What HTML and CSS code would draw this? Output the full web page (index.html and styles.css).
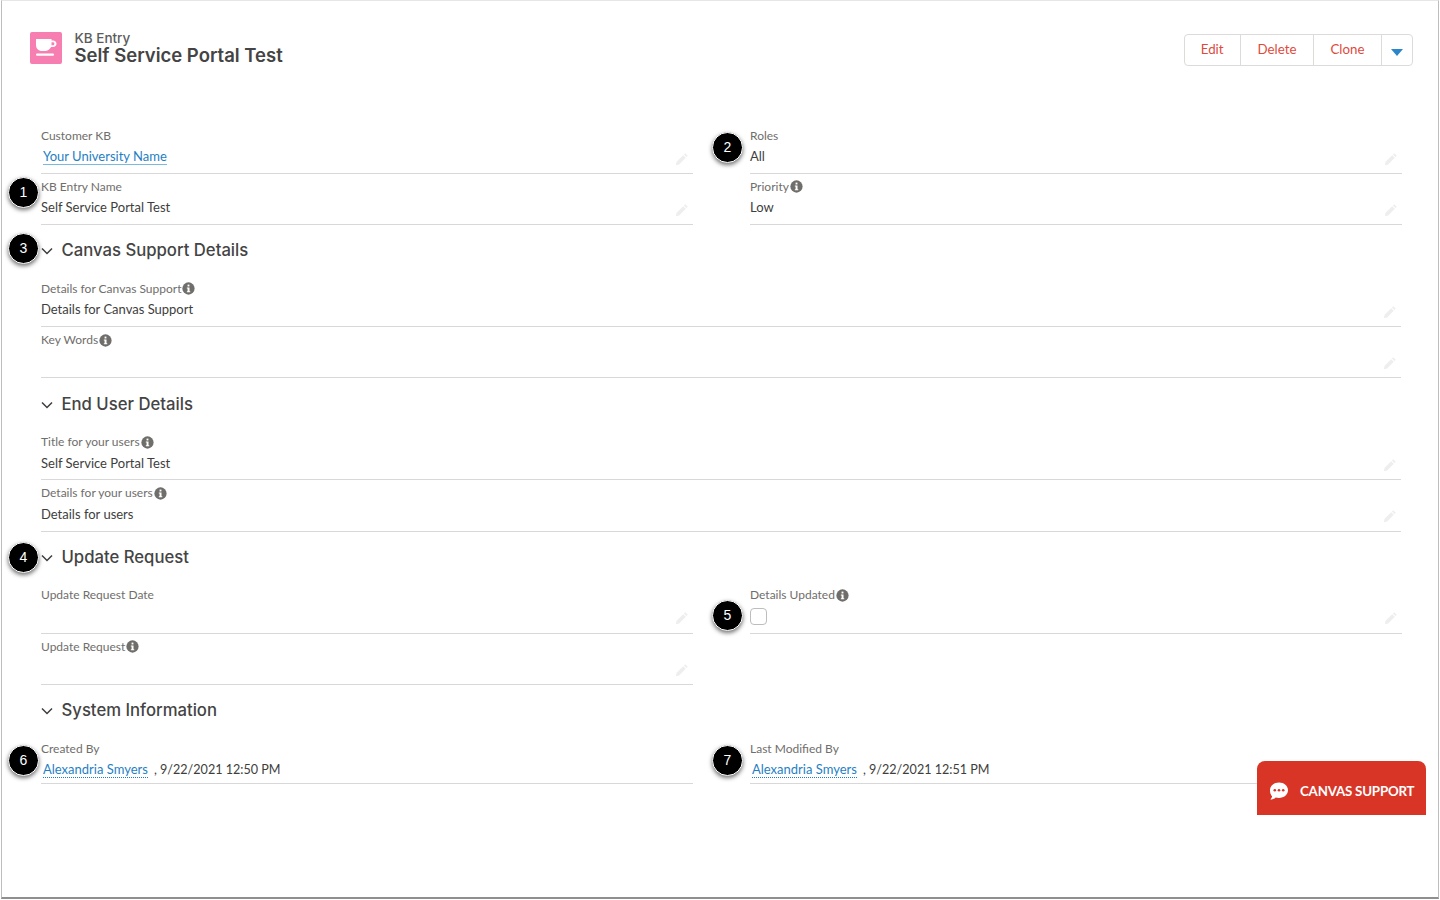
FILE: index.html
```html
<!DOCTYPE html>
<html lang="en">
<head>
    <meta charset="UTF-8">
    <title>KB Entry - Self Service Portal Test</title>
    <link rel="stylesheet" href="styles.css">
</head>
<body>
    <svg class="defs" width="0" height="0">
        <symbol id="pencil" viewBox="0 0 14 14">
            <path d="M10.2 1.2l2.6 2.6-1.3 1.3-2.6-2.6zM8.2 3.2l2.6 2.6-6.6 6.6-3.4.8.8-3.4z"/>
        </symbol>
        <symbol id="info" viewBox="0 0 14 14">
            <circle cx="7" cy="7" r="6.6" fill="#706e6b"/>
            <rect x="6" y="2.8" width="2" height="2" fill="#fff"/>
            <path d="M5.2 5.9h2.9v4h.8v1.2H5.2V9.9H6V7.1h-.8z" fill="#fff"/>
        </symbol>
        <symbol id="chevron" viewBox="0 0 14 14">
            <path d="M2 4.5l5 5 5-5" fill="none" stroke="#3e3e3c" stroke-width="1.5"/>
        </symbol>
    </svg>

    <div class="window">
        <header class="page-header">
            <div class="title-group">
                <div class="entity-icon">
                    <svg width="24" height="20" viewBox="0 0 24 20">
                        <path d="M2 1h15.5v1.6h1.6c2 0 3.4 1.4 3.4 3.2s-1.400 3.200-3.400 3.200h-2C15.500 11.500 13.500 13 11 13H8C4.500 13 2 10.500 2 7zM17.500 4.300V7.300h1.400c.9 0 1.500-.6 1.500-1.500s-.6-1.500-1.500-1.500z" fill="#fff" fill-rule="evenodd"/>
                        <rect x="2" y="15.600" width="18" height="2.200" rx="1.100" fill="#fff"/>
                    </svg>
                </div>
                <div>
                    <div class="entity-type">KB Entry</div>
                    <h1 class="entity-name">Self Service Portal Test</h1>
                </div>
            </div>
            <div class="actions">
                <button class="action">Edit</button>
                <button class="action">Delete</button>
                <button class="action">Clone</button>
                <button class="action more"><span class="caret"></span></button>
            </div>
        </header>

        <div class="record">
            <div class="two-col">
                <div class="field">
                    <div class="label">Customer KB</div>
                    <div class="value"><a class="link solid" href="#">Your University Name</a></div>
                    <svg class="edit"><use href="#pencil"/></svg>
                </div>
                <div class="field">
                    <div class="label">Roles</div>
                    <div class="value">All</div>
                    <svg class="edit"><use href="#pencil"/></svg>
                </div>
                <div class="field">
                    <div class="label">KB Entry Name</div>
                    <div class="value">Self Service Portal Test</div>
                    <svg class="edit"><use href="#pencil"/></svg>
                </div>
                <div class="field">
                    <div class="label">Priority<svg class="info"><use href="#info"/></svg></div>
                    <div class="value">Low</div>
                    <svg class="edit"><use href="#pencil"/></svg>
                </div>
            </div>

            <h2 class="section-title"><svg class="chevron"><use href="#chevron"/></svg>Canvas Support Details</h2>
            <div class="field">
                <div class="label">Details for Canvas Support<svg class="info"><use href="#info"/></svg></div>
                <div class="value">Details for Canvas Support</div>
                <svg class="edit"><use href="#pencil"/></svg>
            </div>
            <div class="field">
                <div class="label">Key Words<svg class="info"><use href="#info"/></svg></div>
                <div class="value"></div>
                <svg class="edit"><use href="#pencil"/></svg>
            </div>

            <h2 class="section-title"><svg class="chevron"><use href="#chevron"/></svg>End User Details</h2>
            <div class="field">
                <div class="label">Title for your users<svg class="info"><use href="#info"/></svg></div>
                <div class="value">Self Service Portal Test</div>
                <svg class="edit"><use href="#pencil"/></svg>
            </div>
            <div class="field">
                <div class="label">Details for your users<svg class="info"><use href="#info"/></svg></div>
                <div class="value">Details for users</div>
                <svg class="edit"><use href="#pencil"/></svg>
            </div>

            <h2 class="section-title"><svg class="chevron"><use href="#chevron"/></svg>Update Request</h2>
            <div class="two-col">
                <div class="field">
                    <div class="label">Update Request Date</div>
                    <div class="value"></div>
                    <svg class="edit"><use href="#pencil"/></svg>
                </div>
                <div class="field">
                    <div class="label">Details Updated<svg class="info"><use href="#info"/></svg></div>
                    <div class="value"><span class="checkbox"></span></div>
                    <svg class="edit"><use href="#pencil"/></svg>
                </div>
                <div class="field">
                    <div class="label">Update Request<svg class="info"><use href="#info"/></svg></div>
                    <div class="value"></div>
                    <svg class="edit"><use href="#pencil"/></svg>
                </div>
            </div>

            <h2 class="section-title"><svg class="chevron"><use href="#chevron"/></svg>System Information</h2>
            <div class="two-col">
                <div class="field short">
                    <div class="label">Created By</div>
                    <div class="value"><a class="link" href="#">Alexandria Smyers</a><span class="stamp">, 9/22/2021 12:50 PM</span></div>
                </div>
                <div class="field short">
                    <div class="label">Last Modified By</div>
                    <div class="value"><a class="link" href="#">Alexandria Smyers</a><span class="stamp">, 9/22/2021 12:51 PM</span></div>
                </div>
            </div>
        </div>

        <!-- numbered callouts sit on top of the record -->
        <span class="callout c1">1</span>
        <span class="callout c2">2</span>
        <span class="callout c3">3</span>
        <span class="callout c4">4</span>
        <span class="callout c5">5</span>
        <span class="callout c6">6</span>
        <span class="callout c7">7</span>

        <button class="support">
            <svg width="20" height="20" viewBox="0 0 20 20">
                <path d="M10 1.500c5 0 9 3.300 9 7.700s-4 7.700-9 7.700c-1.200 0-2.300-.2-3.300-.5C5.300 17.900 3.300 18.500 1.200 18.500c1-.9 1.700-2 1.900-3.300C1.800 13.900 1 12.300 1 9.200 1 4.800 5 1.500 10 1.500z" fill="#fff"/>
                <circle cx="5.800" cy="9.300" r="1.300" fill="#d83526"/>
                <circle cx="10" cy="9.300" r="1.300" fill="#d83526"/>
                <circle cx="14.200" cy="9.300" r="1.300" fill="#d83526"/>
            </svg>
            CANVAS SUPPORT
        </button>
    </div>
</body>
</html>
```

FILE: styles.css
```css
* {
    box-sizing: border-box;
}

body {
    margin: 0;
    font-family: 'Lato', sans-serif;
    color: #3e3e3c;
    background: #fff;
}

.defs {
    display: block;
    height: 0;
}

.window {
    position: relative;
    width: 1438px;
    height: 899px;
    margin-left: 1px;
    border: 1px solid #d9d9d9;
    border-top-color: #e6e6e6;
    border-bottom: 2px solid #8f8f8f;
    border-left-color: #bdbdbd;
    border-right-color: #bdbdbd;
    overflow: hidden;
}

.page-header {
    display: flex;
    justify-content: space-between;
    align-items: flex-start;
    height: 121.500px;
    padding: 30px 25px 0 28px;
}

.title-group {
    display: flex;
    gap: 12.500px;
}

.entity-icon {
    width: 32px;
    height: 32px;
    margin-top: 1px;
    background: #f77eb0;
    border-radius: 2px;
    display: flex;
    align-items: center;
    justify-content: center;
}

.entity-type {
    font-family: 'Inter', sans-serif;
    font-size: 13.500px;
    line-height: 15px;
    color: #5c5c5c;
    font-weight: 500;
}

.entity-name {
    font-family: 'Inter', sans-serif;
    font-size: 18.500px;
    font-weight: 600;
    line-height: 22px;
    margin: -2px 0 0;
    color: #444;
}

.actions {
    display: flex;
    height: 32px;
    margin-top: 3px;
    border: 1px solid #dddbda;
    border-radius: 4px;
    background: #fff;
}

.action {
    font: 13.3px 'Lato', sans-serif;
    color: #e04a3c;
    background: none;
    border: none;
    border-left: 1px solid #dddbda;
    padding: 0 16.500px 2px;
}

.action:first-child {
    border-left: none;
    padding-left: 16px;
}

.action.more {
    width: 31px;
    padding: 0;
    display: flex;
    align-items: center;
    justify-content: center;
}

.caret {
    margin-top: 4px;
    border-left: 6px solid transparent;
    border-right: 6px solid transparent;
    border-top: 7px solid #2b87c9;
}

.record {
    margin: 0 37px 0 39px;
}

.two-col {
    display: grid;
    grid-template-columns: 652px 652px;
    column-gap: 57px;
}

.field {
    position: relative;
    height: 51.300px;
    border-bottom: 1px solid #d8d8d8;
}

.field.short {
    height: 48px;
}

.label {
    display: flex;
    align-items: center;
    font-size: 12px;
    line-height: 18px;
    padding-top: 4px;
    height: 22px;
    color: #706e6b;
}

.value {
    font-size: 13px;
    line-height: 20px;
    margin-top: 1.500px;
    color: #3e3e3c;
}

.link {
    color: #1f7fc4;
    text-decoration: none;
    margin-left: 2px;
    border-bottom: 1px dotted #1f7fc4;
}

.link.solid {
    border-bottom-style: solid;
    border-bottom-color: #7db8e0;
}

.stamp {
    margin-left: 6px;
    font-size: 12.600px;
}

.info {
    width: 13px;
    height: 13px;
    margin-left: 1px;
}

.edit {
    position: absolute;
    right: 4px;
    top: 29px;
    width: 14px;
    height: 14px;
    fill: #eeeeee;
}

.section-title {
    display: flex;
    align-items: center;
    height: 50.700px;
    margin: 0;
    font-family: 'Inter', sans-serif;
    font-size: 16.700px;
    font-weight: 500;
    color: #444;
}

.chevron {
    width: 14px;
    height: 14px;
    margin: 2px 7.500px 0 -1px;
}

.checkbox {
    display: block;
    width: 17px;
    height: 17px;
    margin-top: 4px;
    background: #fff;
    border: 1px solid #bdbdbd;
    border-radius: 4px;
}

.callout {
    position: absolute;
    width: 31px;
    height: 31px;
    border-radius: 50%;
    background: #000;
    border: 1px solid #fff;
    color: #fff;
    font: 14px/29px 'Liberation Sans', sans-serif;
    text-align: center;
    box-shadow: 0 2px 4px rgba(0, 0, 0, 0.55);
}

.c1 { left: 6px; top: 176px; }
.c2 { left: 710px; top: 131px; }
.c3 { left: 6px; top: 232px; }
.c4 { left: 6px; top: 541px; }
.c5 { left: 710px; top: 599px; }
.c6 { left: 6px; top: 744px; }
.c7 { left: 710px; top: 744px; }

.support {
    position: absolute;
    left: 1255px;
    top: 760px;
    width: 169px;
    height: 54px;
    display: flex;
    align-items: center;
    gap: 11px;
    padding: 5px 0 0 12px;
    font: bold 13.300px 'Lato', sans-serif;
    letter-spacing: -0.2px;
    color: #fff;
    background: #d83526;
    border: none;
    border-radius: 8px 8px 0 0;
}
```
